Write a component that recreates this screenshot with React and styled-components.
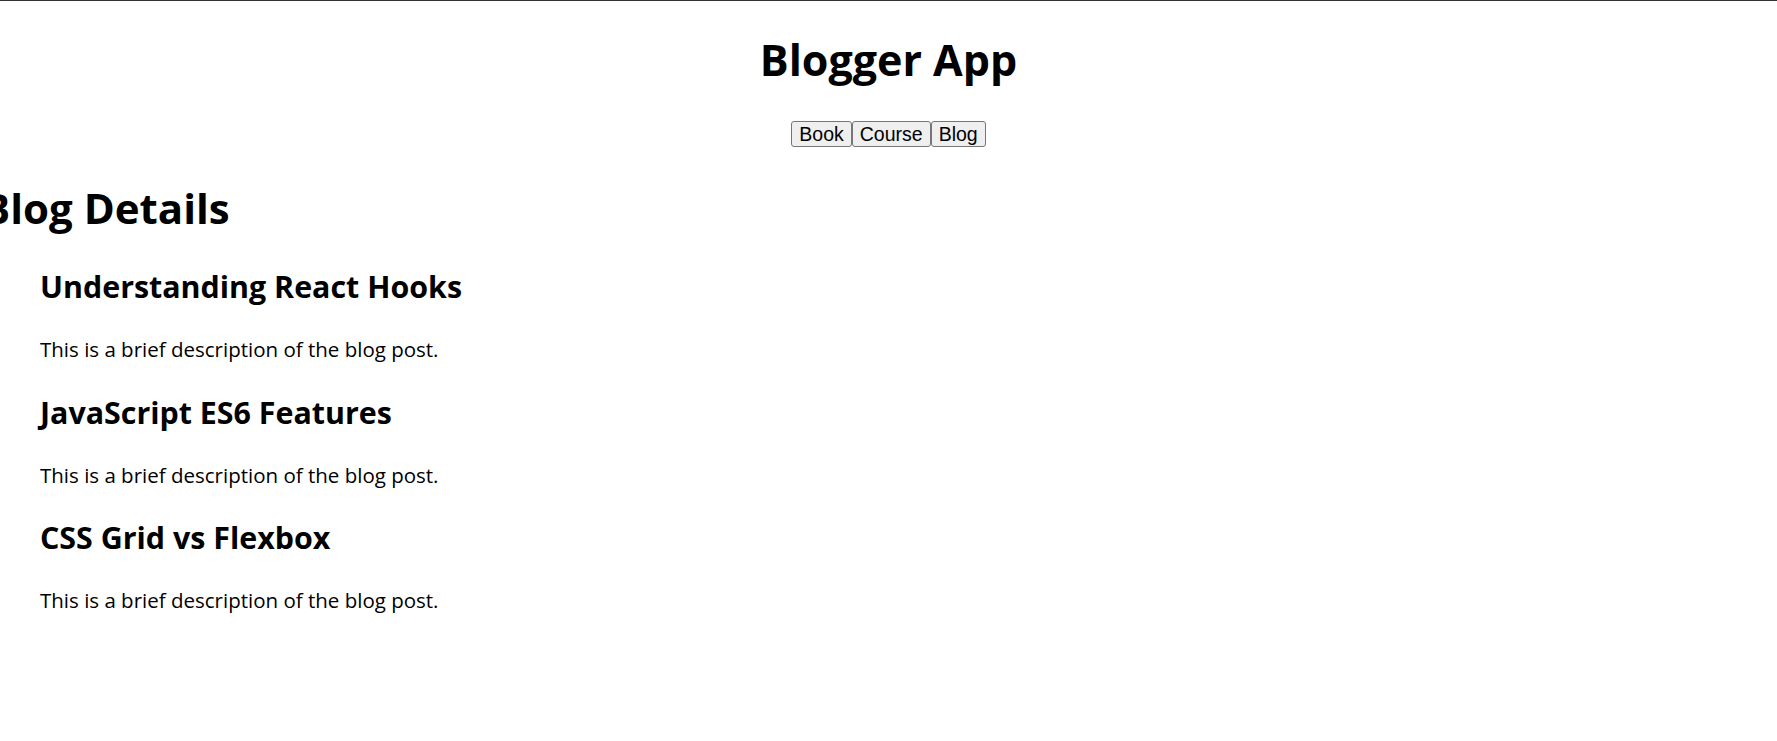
import React, { useState } from "react";
import styled, { createGlobalStyle } from "styled-components";

const GlobalStyle = createGlobalStyle`
  html, body {
    margin: 0;
    padding: 0;
    background: #ffffff;
  }
  body {
    font-family: "Open Sans", "Noto Sans", sans-serif;
    color: #000000;
    overflow: hidden;
  }
`;

const Pagina = styled.div`
  border-top: 1px solid #333333;
  padding-top: 30px;
  min-height: 740px;
`;

const Titulo = styled.h1`
  margin: 0;
  text-align: center;
  font-size: 43px;
  line-height: 57px;
  font-weight: 700;
`;

const Menu = styled.div`
  display: flex;
  justify-content: center;
  margin-top: 33px;
`;

const Botao = styled.button`
  font-family: "Liberation Sans", Arial, sans-serif;
  font-size: 19.5px;
  line-height: 22px;
  padding: 1px 7px;
  margin: 0;
  color: #000000;
  background: #efefef;
  border: 1px solid ${(p) => (p.$ativo ? "#767676" : "#767676")};
  border-radius: 3px;
  cursor: pointer;
`;

const Secao = styled.section`
  margin-top: 34px;
`;

const TituloSecao = styled.h2`
  margin: 0 0 0 -18px;
  font-size: 42px;
  line-height: 54px;
  font-weight: 700;
  white-space: nowrap;
`;

const Lista = styled.div`
  display: flex;
  flex-direction: column;
  gap: 29.5px;
  padding-left: 40px;
  margin-top: 33px;
`;

const Post = styled.article`
  display: flex;
  flex-direction: column;
  gap: 28px;
`;

const PostTitulo = styled.h3`
  margin: 0;
  font-size: 30.4px;
  line-height: 38px;
  font-weight: 700;
`;

const PostTexto = styled.p`
  margin: 0;
  font-size: 20.5px;
  line-height: 30px;
`;

const posts = [
  { id: 1, titulo: "Understanding React Hooks" },
  { id: 2, titulo: "JavaScript ES6 Features" },
  { id: 3, titulo: "CSS Grid vs Flexbox" },
];

export default function App() {
  const [aba, setAba] = useState("Blog");

  return (
    <Pagina>
      <GlobalStyle />
      <Titulo>Blogger App</Titulo>
      <Menu>
        {["Book", "Course", "Blog"].map((nome) => (
          <Botao key={nome} $ativo={aba === nome} onClick={() => setAba(nome)}>
            {nome}
          </Botao>
        ))}
      </Menu>

      <Secao>
        <TituloSecao>{aba} Details</TituloSecao>
        <Lista>
          {posts.map((itens) => (
            <Post key={itens.id}>
              <PostTitulo>{itens.titulo}</PostTitulo>
              <PostTexto>This is a brief description of the blog post.</PostTexto>
            </Post>
          ))}
        </Lista>
      </Secao>
    </Pagina>
  );
}
